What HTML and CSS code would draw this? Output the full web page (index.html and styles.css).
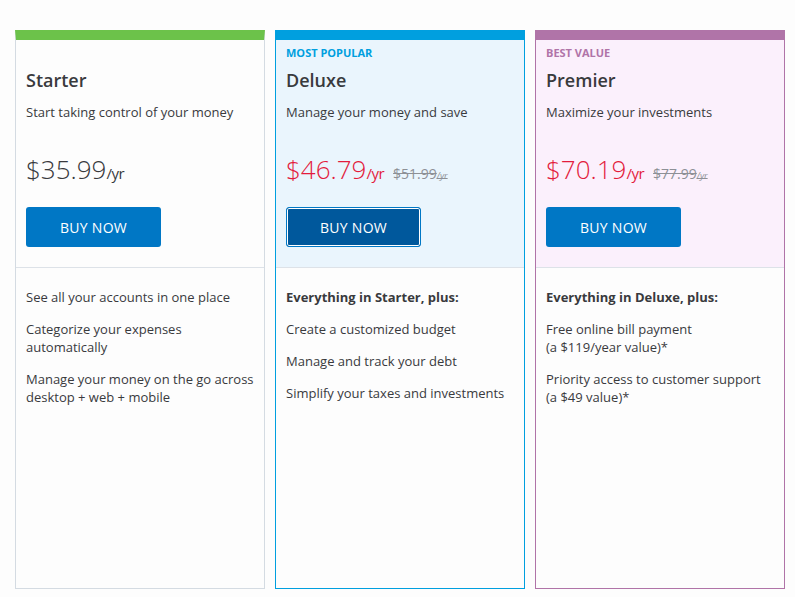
FILE: index.html
```html
<!DOCTYPE html>
<html lang="en">
<head>
<meta charset="utf-8">
<title>Plans</title>
<link rel="stylesheet" href="styles.css">
</head>
<body>
<div class="plans">
  <div class="card starter">
    <div class="top">
      <div class="label">&nbsp;</div>
      <h2 class="title">Starter</h2>
      <p class="sub">Start taking control of your money</p>
      <div class="price"><span class="amt">$35.99</span><span class="per">/yr</span></div>
      <button class="buy">BUY NOW</button>
    </div>
    <ul class="features">
      <li>See all your accounts in one place</li>
      <li>Categorize your expenses automatically</li>
      <li>Manage your money on the go across desktop + web + mobile</li>
    </ul>
  </div>
  <div class="card deluxe">
    <div class="top">
      <div class="label">MOST POPULAR</div>
      <h2 class="title">Deluxe</h2>
      <p class="sub">Manage your money and save</p>
      <div class="price sale"><span class="amt">$46.79</span><span class="per">/yr</span><s class="old">$51.99<span class="oldper">/yr</span></s></div>
      <button class="buy focus">BUY NOW</button>
    </div>
    <ul class="features">
      <li class="head">Everything in Starter, plus:</li>
      <li>Create a customized budget</li>
      <li>Manage and track your debt</li>
      <li>Simplify your taxes and investments</li>
    </ul>
  </div>
  <div class="card premier">
    <div class="top">
      <div class="label">BEST VALUE</div>
      <h2 class="title">Premier</h2>
      <p class="sub">Maximize your investments</p>
      <div class="price sale"><span class="amt">$70.19</span><span class="per">/yr</span><s class="old">$77.99<span class="oldper">/yr</span></s></div>
      <button class="buy">BUY NOW</button>
    </div>
    <ul class="features">
      <li class="head">Everything in Deluxe, plus:</li>
      <li>Free online bill payment<br>(a $119/year value)*</li>
      <li>Priority access to customer support<br>(a $49 value)*</li>
    </ul>
  </div>
</div>
</body>
</html>
```
FILE: styles.css
```css
* { box-sizing: border-box; }
html, body { margin: 0; padding: 0; background: #fdfdfd; }
body {
  font-family: "Open Sans", "Liberation Sans", sans-serif;
  color: #393a3d;
}
.plans {
  display: flex;
  gap: 10px;
  padding: 30px 0 0 15px;
}
.card {
  flex: 0 0 250px;
  width: 250px;
  height: 559px;
  border: 1px solid #d4dbe2;
  border-top: 10px solid #6cc24a;
  background: #fdfdfd;
}
.deluxe { border-color: #009fdf; }
.premier { border-color: #b074a8; }
.top {
  padding: 5px 10px 20px 10px;
  border-bottom: 1px solid #dde2e8;
}
.deluxe .top { background: #eaf5fd; }
.premier .top { background: #fbf0fc; }
.label {
  height: 16px;
  font-size: 11px;
  line-height: 16px;
  font-weight: 700;
}
.deluxe .label { color: #009fdf; }
.premier .label { color: #b074a8; }
.title {
  margin: 7px 0 0 0;
  font-size: 18px;
  line-height: 24px;
  font-weight: 600;
}
.sub {
  margin: 11px 0 0 0;
  font-size: 13px;
  line-height: 18px;
}
.price {
  margin-top: 32px;
  height: 32px;
  display: flex;
  align-items: baseline;
  white-space: nowrap;
}
.amt { font-size: 26px; line-height: 32px; font-weight: 300; }
.per { font-size: 15px; font-weight: 400; letter-spacing: -0.5px; }
.sale { color: #e31c3d; }
.old {
  margin-left: 9px;
  font-size: 14px;
  color: #8d9096;
  text-decoration: line-through;
}
.oldper { font-size: 9px; font-style: italic; }
.buy {
  display: block;
  margin-top: 22px;
  width: 135px;
  height: 40px;
  border: 0;
  border-radius: 3px;
  background: #0077c5;
  color: #fff;
  font-family: inherit;
  font-size: 14px;
  font-weight: 500;
  letter-spacing: 0.3px;
}
.buy.focus {
  background: #00589c;
  border: 1px solid #0077c5;
  box-shadow: inset 0 0 0 1px #fff;
}
.features {
  list-style: none;
  margin: 0;
  padding: 20px 10px 0 10px;
  font-size: 13px;
  line-height: 18px;
}
.features li { margin-bottom: 14px; }
.features li.head { font-weight: 700; }
```
